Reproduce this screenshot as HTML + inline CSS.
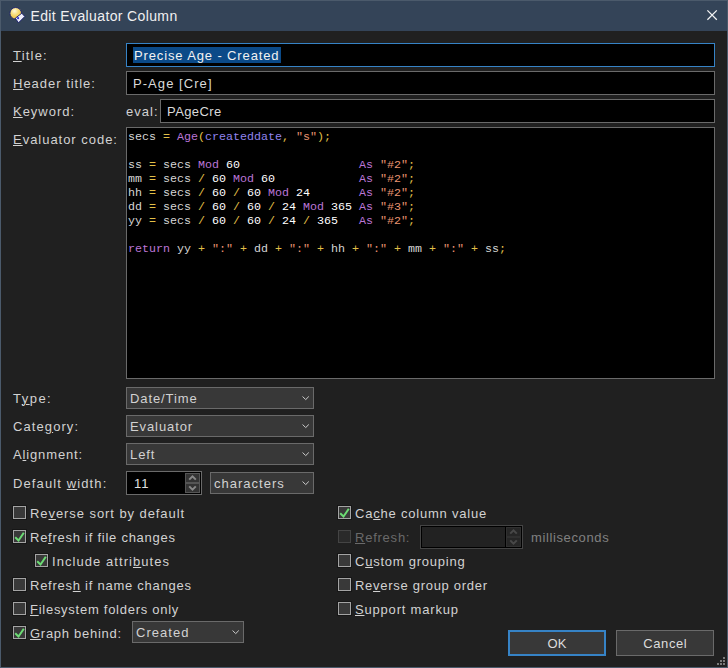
<!DOCTYPE html>
<html><head><meta charset="utf-8">
<style>
*{box-sizing:border-box}
html,body{margin:0;padding:0}
body{width:728px;height:668px;position:relative;overflow:hidden;background:#202020;font-family:"Liberation Sans",sans-serif;font-size:13px;color:#d2d2d2}
.frame{position:absolute;left:0;top:0;width:728px;height:668px;border:1px solid #4b5a6b}
.tb{position:absolute;left:1px;top:1px;width:726px;height:30px;background:#344458}
.t{position:absolute;white-space:nowrap;line-height:15px}
.u{text-decoration:underline;text-underline-offset:1px;text-decoration-thickness:1px}
.box{position:absolute;background:#000;border:1px solid #6a6a6a}
.combo{position:absolute;background:#383838;border:1px solid #6a6a6a;height:22px}
.chev{position:absolute;right:3px;top:7px}
.cb{position:absolute;width:13px;height:13px;background:#393939;border:1px solid #a4a4a4;box-shadow:0 0 0 1px #161616}
.cb svg{position:absolute;left:-1px;top:-1px}
.code{position:absolute;left:128px;top:130px;font-family:"Liberation Mono",monospace;font-size:11.67px;line-height:14px;white-space:pre;color:#d6d6d6}
.o{color:#e2c048}.k{color:#bb76d6}.f{color:#9184ee}.s{color:#e89470}.n{color:#ffffff}
.btn{position:absolute;background:#383838;height:26px;width:98px;text-align:center;color:#dcdcdc}
</style></head><body>
<div class="frame"></div>
<div class="tb"></div>
<!-- title icon -->
<svg style="position:absolute;left:7px;top:5px" width="20" height="20" viewBox="0 0 20 20">
<defs><radialGradient id="g1" cx="0.4" cy="0.3" r="0.75"><stop offset="0" stop-color="#fff8dc"/><stop offset="0.45" stop-color="#f8dc78"/><stop offset="1" stop-color="#eab830"/></radialGradient></defs>
<circle cx="8.7" cy="8.3" r="5.8" fill="url(#g1)" stroke="#1c2070" stroke-width="0.9"/>
<polygon points="14.8,8.2 17.8,11.5 11.5,17.8 8.3,13.2" fill="#eeeefa" stroke="#12186a" stroke-width="0.9"/>
<circle cx="11.1" cy="13.2" r="1.1" fill="#3838d0"/>
</svg>
<div class="t" style="left:30.5px;top:7.6px;font-size:14px;line-height:16px;letter-spacing:0.37px;color:#f0f0f0">Edit Evaluator Column</div>
<svg style="position:absolute;left:706px;top:9px" width="13" height="13" viewBox="0 0 13 13"><path d="M1.4 1.4L10.8 10.8M10.8 1.4L1.4 10.8" stroke="#f4f4f4" stroke-width="1.25"/></svg>

<!-- left labels -->
<div class="t" style="left:13px;top:48px;letter-spacing:1.200px"><span class="u">T</span>itle:</div>
<div class="t" style="left:13px;top:76px;letter-spacing:0.983px"><span class="u">H</span>eader title:</div>
<div class="t" style="left:13px;top:104px;letter-spacing:0.973px"><span class="u">K</span>eyword:</div>
<div class="t" style="left:13px;top:132px;letter-spacing:0.971px"><span class="u">E</span>valuator code:</div>

<div class="box" style="left:126px;top:43px;width:589px;height:24px;border-color:#3683c6"></div>
<div style="position:absolute;left:133px;top:47px;width:148px;height:16px;background:#0b4a88"></div>
<div class="t" style="left:134px;top:48px;letter-spacing:0.87px;color:#f2f2f2">Precise Age - Created</div>

<div class="box" style="left:126px;top:71px;width:589px;height:24px"></div>
<div class="t" style="left:133px;top:76px;letter-spacing:1.06px;color:#dadada">P-Age [Cre]</div>

<div class="t" style="left:126px;top:104px;letter-spacing:1.05px">eval:</div>
<div class="box" style="left:160px;top:99px;width:555px;height:24px"></div>
<div class="t" style="left:167px;top:104px;letter-spacing:0.42px;color:#dadada">PAgeCre</div>

<div class="box" style="left:126px;top:127px;width:589px;height:252px"></div>
<div class="code"><span>secs</span> <span class="o">=</span> <span class="k">Age</span><span class="o">(</span><span class="f">createddate</span><span class="o">,</span> <span class="s">"s"</span><span class="o">);</span>

ss <span class="o">=</span> secs <span class="k">Mod</span> <span class="n">60</span>                 <span class="k">As</span> <span class="s">"#2"</span><span class="o">;</span>
mm <span class="o">=</span> secs <span class="o">/</span> <span class="n">60</span> <span class="k">Mod</span> <span class="n">60</span>            <span class="k">As</span> <span class="s">"#2"</span><span class="o">;</span>
hh <span class="o">=</span> secs <span class="o">/</span> <span class="n">60</span> <span class="o">/</span> <span class="n">60</span> <span class="k">Mod</span> <span class="n">24</span>       <span class="k">As</span> <span class="s">"#2"</span><span class="o">;</span>
dd <span class="o">=</span> secs <span class="o">/</span> <span class="n">60</span> <span class="o">/</span> <span class="n">60</span> <span class="o">/</span> <span class="n">24</span> <span class="k">Mod</span> <span class="n">365</span> <span class="k">As</span> <span class="s">"#3"</span><span class="o">;</span>
yy <span class="o">=</span> secs <span class="o">/</span> <span class="n">60</span> <span class="o">/</span> <span class="n">60</span> <span class="o">/</span> <span class="n">24</span> <span class="o">/</span> <span class="n">365</span>   <span class="k">As</span> <span class="s">"#2"</span><span class="o">;</span>

<span class="k">return</span> yy <span class="o">+</span> <span class="s">":"</span> <span class="o">+</span> dd <span class="o">+</span> <span class="s">":"</span> <span class="o">+</span> hh <span class="o">+</span> <span class="s">":"</span> <span class="o">+</span> mm <span class="o">+</span> <span class="s">":"</span> <span class="o">+</span> ss<span class="o">;</span></div>

<!-- type/category/alignment -->
<div class="t" style="left:13px;top:391px;letter-spacing:1.475px">T<span class="u">y</span>pe:</div>
<div class="t" style="left:13px;top:419px;letter-spacing:1.087px">Cate<span class="u">g</span>ory:</div>
<div class="t" style="left:13px;top:447px;letter-spacing:0.856px">A<span class="u">l</span>ignment:</div>
<div class="t" style="left:13px;top:476px;letter-spacing:1.115px">Default <span class="u">w</span>idth:</div>

<div class="combo" style="left:126px;top:387px;width:188px"><div class="t" style="left:3px;top:3px;letter-spacing:0.9px">Date/Time</div><svg class="chev" width="9" height="6" viewBox="0 0 9 6"><path d="M1.6 1.5L4.7 4.6L7.8 1.5" fill="none" stroke="#d0d0d0" stroke-width="1"/></svg></div>
<div class="combo" style="left:126px;top:415px;width:188px"><div class="t" style="left:3px;top:3px;letter-spacing:0.9px">Evaluator</div><svg class="chev" width="9" height="6" viewBox="0 0 9 6"><path d="M1.6 1.5L4.7 4.6L7.8 1.5" fill="none" stroke="#d0d0d0" stroke-width="1"/></svg></div>
<div class="combo" style="left:126px;top:443px;width:188px"><div class="t" style="left:3px;top:3px;letter-spacing:0.9px">Left</div><svg class="chev" width="9" height="6" viewBox="0 0 9 6"><path d="M1.6 1.5L4.7 4.6L7.8 1.5" fill="none" stroke="#d0d0d0" stroke-width="1"/></svg></div>

<!-- width spin -->
<div class="box" style="left:126px;top:471px;width:76px;height:24px"></div>
<div class="t" style="left:134px;top:476px;letter-spacing:0.9px;color:#e0e0e0">11</div>
<div style="position:absolute;left:185px;top:473px;width:15px;height:10px;background:#333;border:1px solid #555"></div>
<div style="position:absolute;left:185px;top:483px;width:15px;height:10px;background:#333;border:1px solid #555"></div>
<svg style="position:absolute;left:185px;top:473px" width="15" height="20" viewBox="0 0 15 20"><path d="M4.2 6.6L7.5 3.3L10.8 6.6M4.2 13.4L7.5 16.7L10.8 13.4" fill="none" stroke="#888" stroke-width="2"/></svg>
<div class="combo" style="left:210px;top:472px;width:104px"><div class="t" style="left:3px;top:3px;letter-spacing:1.01px">characters</div><svg class="chev" width="9" height="6" viewBox="0 0 9 6"><path d="M1.6 1.5L4.7 4.6L7.8 1.5" fill="none" stroke="#d0d0d0" stroke-width="1"/></svg></div>

<!-- checkboxes left -->
<div class="cb" style="left:13px;top:506px"></div>
<div class="t" style="left:30px;top:506px;letter-spacing:0.927px">Re<span class="u">v</span>erse sort by default</div>
<div class="cb" style="left:13px;top:530px"><svg width="13" height="13" viewBox="0 0 13 13"><path d="M2.2 7.3L5.5 10.5L10.8 2.8" fill="none" stroke="#6cdc74" stroke-width="2"/></svg></div>
<div class="t" style="left:30px;top:530px;letter-spacing:0.745px">Re<span class="u">f</span>resh if file changes</div>
<div class="cb" style="left:35px;top:554px"><svg width="13" height="13" viewBox="0 0 13 13"><path d="M2.2 7.3L5.5 10.5L10.8 2.8" fill="none" stroke="#6cdc74" stroke-width="2"/></svg></div>
<div class="t" style="left:52px;top:554px;letter-spacing:1.059px">Include attri<span class="u">b</span>utes</div>
<div class="cb" style="left:13px;top:578px"></div>
<div class="t" style="left:30px;top:578px;letter-spacing:0.745px">Refres<span class="u">h</span> if name changes</div>
<div class="cb" style="left:13px;top:602px"></div>
<div class="t" style="left:30px;top:602px;letter-spacing:0.732px"><span class="u">F</span>ilesystem folders only</div>
<div class="cb" style="left:13px;top:626px"><svg width="13" height="13" viewBox="0 0 13 13"><path d="M2.2 7.3L5.5 10.5L10.8 2.8" fill="none" stroke="#6cdc74" stroke-width="2"/></svg></div>
<div class="t" style="left:30px;top:626px;letter-spacing:0.725px"><span class="u">G</span>raph behind:</div>
<div class="combo" style="left:132px;top:621px;width:112px"><div class="t" style="left:3px;top:3px;letter-spacing:1.03px">Created</div><svg class="chev" width="9" height="6" viewBox="0 0 9 6"><path d="M1.6 1.5L4.7 4.6L7.8 1.5" fill="none" stroke="#d0d0d0" stroke-width="1"/></svg></div>

<!-- checkboxes right -->
<div class="cb" style="left:338px;top:506px"><svg width="13" height="13" viewBox="0 0 13 13"><path d="M2.2 7.3L5.5 10.5L10.8 2.8" fill="none" stroke="#6cdc74" stroke-width="2"/></svg></div>
<div class="t" style="left:355px;top:506px;letter-spacing:0.791px">Ca<span class="u">c</span>he column value</div>
<div class="cb" style="left:338px;top:530px;background:#2a2a2a;border-color:#444;box-shadow:none"></div>
<div class="t" style="left:355px;top:530px;letter-spacing:0.764px;color:#6a6a6a"><span class="u">R</span>efresh:</div>
<div class="box" style="left:420px;top:525px;width:103px;height:24px;border-color:#444;background:#222;box-shadow:inset 0 0 0 1px #000"></div>
<div style="position:absolute;left:505px;top:527px;width:16px;height:20px;border-left:1px solid #000"></div>
<div style="position:absolute;left:506px;top:527px;width:15px;height:10px;background:#262626;border:1px solid #303030"></div>
<div style="position:absolute;left:506px;top:537px;width:15px;height:10px;background:#262626;border:1px solid #303030"></div>
<svg style="position:absolute;left:506px;top:527px" width="15" height="20" viewBox="0 0 15 20"><path d="M4.2 6.6L7.5 3.3L10.8 6.6M4.2 13.4L7.5 16.7L10.8 13.4" fill="none" stroke="#484848" stroke-width="2"/></svg>
<div class="t" style="left:531px;top:530px;letter-spacing:0.623px;color:#808080">milliseconds</div>
<div class="cb" style="left:338px;top:554px"></div>
<div class="t" style="left:355px;top:554px;letter-spacing:0.756px">C<span class="u">u</span>stom grouping</div>
<div class="cb" style="left:338px;top:578px"></div>
<div class="t" style="left:355px;top:578px;letter-spacing:0.713px">Re<span class="u">v</span>erse group order</div>
<div class="cb" style="left:338px;top:602px"></div>
<div class="t" style="left:355px;top:602px;letter-spacing:0.807px"><span class="u">S</span>upport markup</div>

<!-- buttons -->
<div class="btn" style="left:508px;top:630px;border:2px solid #3683c6;line-height:24px">OK</div>
<div class="btn" style="left:616px;top:630px;border:1px solid #6a6a6a;line-height:26px;letter-spacing:0.6px;text-indent:0.6px">Cancel</div>

<!-- grip -->
<svg style="position:absolute;left:716px;top:656px" width="10" height="10" viewBox="0 0 10 10" fill="#7a7a7a"><rect x="7" y="1" width="2" height="2"/><rect x="4" y="4" width="2" height="2"/><rect x="7" y="4" width="2" height="2"/><rect x="1" y="7" width="2" height="2"/><rect x="4" y="7" width="2" height="2"/><rect x="7" y="7" width="2" height="2"/></svg>
</body></html>
